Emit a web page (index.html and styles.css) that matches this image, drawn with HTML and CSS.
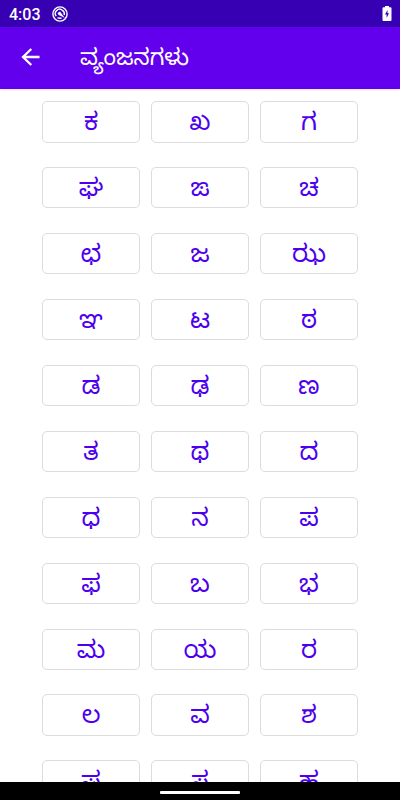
FILE: index.html
```html
<!DOCTYPE html>
<html lang="kn">
<head>
<meta charset="utf-8">
<title>ವ್ಯಂಜನಗಳು</title>
<link rel="stylesheet" href="styles.css">
</head>
<body>
<div class="status"><span class="time">4:03</span>
<svg class="notif" width="16" height="16" viewBox="0 0 16 16" fill="none" stroke="#fff"><circle cx="8" cy="8" r="7.100" stroke-width="1.400"/><path d="M4.200 10.200A4.300 4.300 0 0 1 10.500 4.400A4.300 4.300 0 0 1 12.200 9M5.500 11.600Q7.500 12.800 9.500 12" stroke-width="1.400"/><path d="M5.500 7L8 5.500L12.800 12L9 10Q6 9.600 5.500 7z" fill="#fff" stroke="none"/></svg>
<svg class="battery" width="10" height="15" viewBox="0 0 10 15"><path fill="#fff" d="M3 0h4v1.300h1.500q1 0 1 1V14q0 1-1 1h-7q-1 0-1-1V2.300q0-1 1-1H3z"/><path fill="#3700b3" d="M5.500 4L3 8.500h1.600V12L7 7.300H5.500z"/></svg></div>
<header class="bar"><svg class="back" width="20" height="20" viewBox="0 0 20 20" fill="none" stroke="#fff" stroke-width="2.300"><path d="M18.500 10H2.500M10.300 2L2 10L10.300 18"/></svg><h1>ವ್ಯಂಜನಗಳು</h1></header>
<main class="grid">
<button>ಕ</button><button>ಖ</button><button>ಗ</button>
<button>ಘ</button><button>ಙ</button><button>ಚ</button>
<button>ಛ</button><button>ಜ</button><button>ಝ</button>
<button>ಞ</button><button>ಟ</button><button>ಠ</button>
<button>ಡ</button><button>ಢ</button><button>ಣ</button>
<button>ತ</button><button>ಥ</button><button>ದ</button>
<button>ಧ</button><button>ನ</button><button>ಪ</button>
<button>ಫ</button><button>ಬ</button><button>ಭ</button>
<button>ಮ</button><button>ಯ</button><button>ರ</button>
<button>ಲ</button><button>ವ</button><button>ಶ</button>
<button>ಷ</button><button>ಸ</button><button>ಹ</button>
</main>
<footer class="nav"><span class="handle"></span></footer>
</body>
</html>
```
FILE: styles.css
```css
* { box-sizing: border-box; }
body { margin: 0; height: 800px; display: flex; flex-direction: column; overflow: hidden; background: #fff; font-family: Roboto, "Noto Sans Kannada", "Noto Sans", sans-serif; }
.status { flex: 0 0 27px; display: flex; align-items: center; padding: 0 8px 0 9px; background: #3700b3; color: #fff; }
.time { font-size: 16px; font-weight: 500; width: 43px; padding-top: 1px; }
.battery { margin-left: auto; }
.bar { flex: 0 0 62px; display: flex; align-items: center; padding: 0 0 2px 21px; background: #6200ee; color: #fff; box-shadow: 0 1px 2px rgba(0, 0, 0, .12); z-index: 1; }
h1 { margin: 0 0 0 39px; font-size: 22.7px; font-weight: 370; line-height: 30px; padding-top: 1px; }
.grid { flex: 1; min-height: 0; overflow: hidden; display: grid; grid-template-columns: repeat(3, 98px); grid-auto-rows: 41.5px; align-content: start; justify-content: center; gap: 24.45px 11px; padding-top: 12px; }
button { border: 1px solid #dcdcdc; border-radius: 5px; background: #fff; padding: 0; color: #4c00ee; font-family: inherit; font-size: 24.7px; font-weight: 370; line-height: 37.5px; }
.nav { flex: 0 0 18px; background: #000; display: flex; justify-content: center; align-items: center; padding-top: 2px; }
.handle { width: 80px; height: 3px; border-radius: 1px; background: #fff; }
```
